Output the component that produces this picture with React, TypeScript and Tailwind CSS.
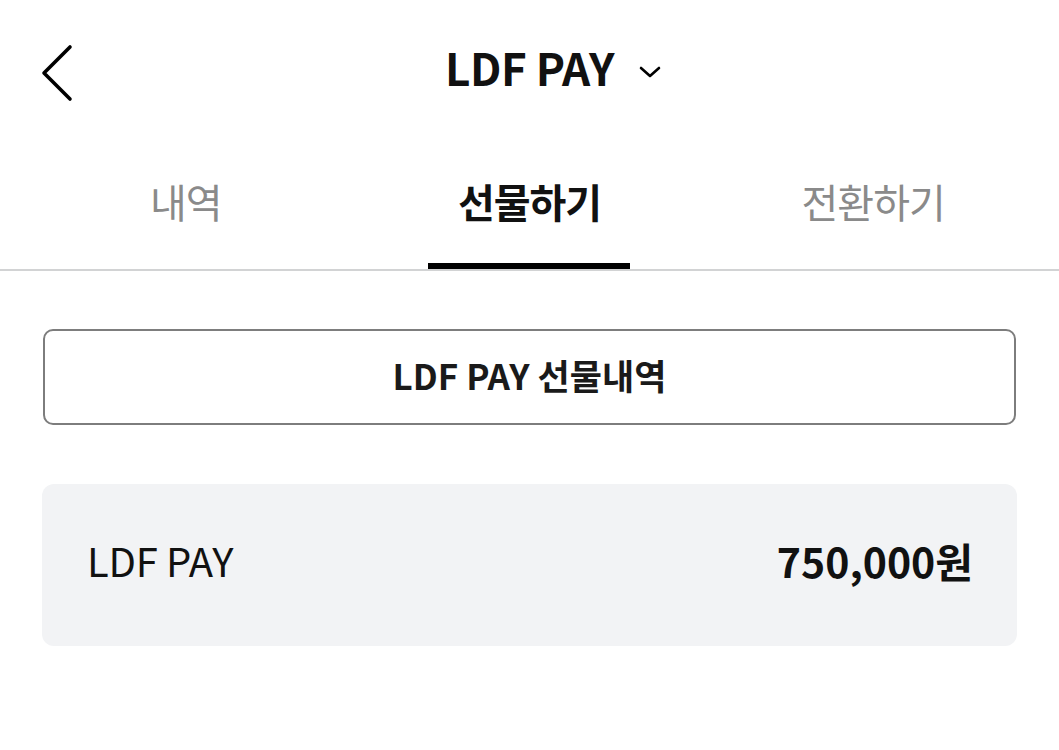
import React from "react";

const font = { fontFamily: '"Noto Sans CJK KR", "Noto Sans", sans-serif' };

export default function App() {
  return (
    <div className="w-[1059px] h-[750px] bg-white text-[#111]" style={font}>
      <div className="grid grid-cols-[1fr_auto_1fr] items-center h-[146px]">
        <div className="flex items-center pl-[40px]">
          <svg width="34" height="60" viewBox="0 0 34 60" fill="none">
            <path d="M30 4 L4 30 L30 56" stroke="#000" strokeWidth="3.6" strokeLinecap="round" strokeLinejoin="round" />
          </svg>
        </div>
        <div className="text-[44px] font-bold leading-none tracking-[-0.5px] pb-[12px]">LDF PAY</div>
        <div className="flex items-center pl-[25px] pb-[2px]">
          <svg width="22" height="14" viewBox="0 0 22 14" fill="none">
            <path d="M2 3 L11 11 L20 3" stroke="#000" strokeWidth="2.6" strokeLinecap="round" strokeLinejoin="round" />
          </svg>
        </div>
      </div>
      <div className="border-b-2 border-[#d2d3d4]">
        <div className="grid grid-cols-3 px-[14px] h-[123px]">
          <div className="flex flex-col items-center">
            <div className="flex-1 flex items-center pb-[8px] text-[40px] text-[#8a8a8a] leading-none tracking-[-1px]">내역</div>
            <div className="h-[6px]" />
          </div>
          <div className="flex flex-col items-center">
            <div className="flex-1 flex items-center pb-[8px] text-[40px] font-bold leading-none tracking-[-1px]">선물하기</div>
            <div className="h-[6px] w-[202px] bg-black" />
          </div>
          <div className="flex flex-col items-center">
            <div className="flex-1 flex items-center pb-[8px] text-[40px] text-[#8a8a8a] leading-none tracking-[-1px]">전환하기</div>
            <div className="h-[6px]" />
          </div>
        </div>
      </div>
      <div className="mx-[43px] mt-[58px] h-[96px] border-2 border-[#7d7d7d] rounded-[10px] flex items-center justify-center pb-[6px]">
        <span className="text-[35px] font-bold text-[#1a1a1a] leading-none">LDF PAY 선물내역</span>
      </div>
      <div className="mx-[42px] mt-[59px] h-[162px] bg-[#f2f3f5] rounded-[12px] flex items-center justify-between pl-[45px] pr-[44px] pb-[10px]">
        <span className="text-[40px] leading-none tracking-[-0.3px]">LDF PAY</span>
        <span className="text-[41px] font-bold leading-none">750,000원</span>
      </div>
    </div>
  );
}
